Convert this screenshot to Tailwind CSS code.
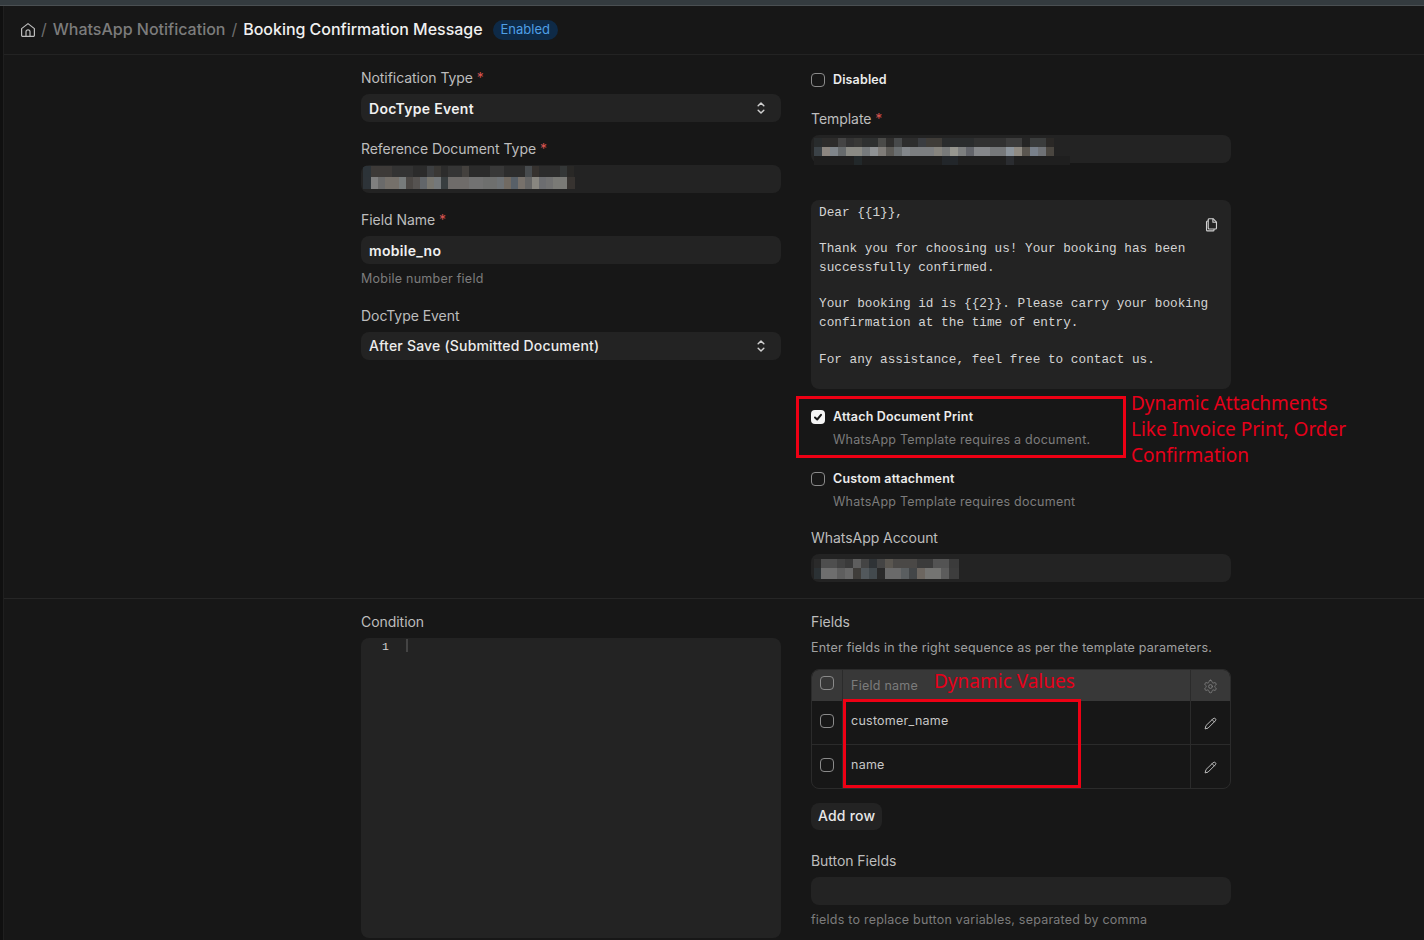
<!DOCTYPE html>
<html>
<head>
<meta charset="utf-8">
<script src="https://cdn.jsdelivr.net/npm/@tailwindcss/browser@4"></script>
</head>
<body class="bg-[#171717] font-['Inter','Liberation_Sans',sans-serif] overflow-hidden">
<div class="relative w-[1424px] h-[940px] overflow-hidden flex flex-col">
  <div class="h-[6px] bg-[#343b3f] border-b border-[#4a4f52] shrink-0"></div>
  <div class="flex flex-1 min-h-0">
    <div class="w-[4px] bg-[#101010] border-r border-[#1f1f1f] shrink-0"></div>
    <div class="flex-1 min-w-0">
      <header class="h-[49px] border-b border-[#232323] flex items-center pl-[16px] pb-[2px]">
        <svg class="w-4 h-4 text-[#bdbdbd] mr-[5px] mt-[2px]" viewBox="0 0 16 16" fill="none" stroke="currentColor" stroke-width="1.2" stroke-linejoin="round"><path d="M1.6 6.6 8 1.6l6.4 5V13.2a1.2 1.2 0 0 1-1.2 1.2H2.8a1.2 1.2 0 0 1-1.2-1.2z"/><path d="M6 14.4V9.8a2 2 0 0 1 4 0V14.4"/></svg>
        <span class="text-[#6e6e6e] text-base mr-[6px]">/</span>
        <span class="text-[#7c7c7c] text-base font-medium">WhatsApp Notification</span>
        <span class="text-[#6e6e6e] text-base mx-[6px]">/</span>
        <span class="text-[#f0f0f0] text-base font-medium tracking-[-0.03px]">Booking Confirmation Message</span>
        <span class="ml-[10px] mt-[2px] h-[20px] px-[8px] rounded-full bg-[#0e2a47] text-[#4f9fe6] text-[13px] flex items-center">Enabled</span>
      </header>

      <section class="h-[544px] border-b border-[#262626] flex pl-[357px] gap-[30px]">
        <div class="w-[420px] pt-[15px]">
          <div class="text-sm text-[#bdbdbd] leading-[16px] tracking-[-0.05px]">Notification Type <span class="text-[#d9534f]">*</span></div>
          <div class="mt-[8px] h-[28px] rounded-lg bg-[#232323] flex items-center justify-between pl-[8px] pr-[11px] text-sm font-semibold tracking-[0.3px] text-[#f0f0f0]"><span class="pt-[2px]">DocType Event</span>
            <svg class="w-[18px] h-[18px] text-[#d0d0d0]" viewBox="0 0 16 16" fill="none" stroke="currentColor" stroke-width="1.3" stroke-linecap="round" stroke-linejoin="round"><path d="M5.5 6 8 3.5 10.5 6M5.5 10 8 12.5 10.5 10"/></svg>
          </div>
          <div class="mt-[19px] text-sm text-[#bdbdbd] leading-[16px] tracking-[-0.05px]">Reference Document Type <span class="text-[#d9534f]">*</span></div>
          <div class="mt-[8px] h-[28px] rounded-lg bg-[#232323] overflow-hidden pl-[2px] pt-[1px]">
            <div class="flex h-[11px]">
              <div class="w-[8px] bg-[#2c3338]"></div><div class="w-[21px] bg-[#3d3a38]"></div><div class="w-[21px] bg-[#333333]"></div><div class="w-[14px] bg-[#2b2b2b]"></div><div class="w-[7px] bg-[#3d3f41]"></div><div class="w-[7px] bg-[#3a3835]"></div><div class="w-[7px] bg-[#2c2c2c]"></div><div class="w-[14px] bg-[#353535]"></div><div class="w-[7px] bg-[#44413e]"></div><div class="w-[21px] bg-[#2b2b2b]"></div><div class="w-[14px] bg-[#383838]"></div><div class="w-[21px] bg-[#2d2d2d]"></div><div class="w-[7px] bg-[#474b4e]"></div><div class="w-[7px] bg-[#36322f]"></div><div class="w-[21px] bg-[#2c2c2c]"></div><div class="w-[7px] bg-[#343737]"></div><div class="w-[7px] bg-[#292826]"></div>
            </div>
            <div class="flex h-[12px]">
              <div class="w-[8px] bg-[#2d3338]"></div><div class="w-[7px] bg-[#7f7f7f]"></div><div class="w-[7px] bg-[#6a6a6a]"></div><div class="w-[14px] bg-[#75706a]"></div><div class="w-[7px] bg-[#777b7b]"></div><div class="w-[7px] bg-[#4c4845]"></div><div class="w-[7px] bg-[#565351]"></div><div class="w-[7px] bg-[#62666a]"></div><div class="w-[7px] bg-[#78766f]"></div><div class="w-[7px] bg-[#74787a]"></div><div class="w-[7px] bg-[#383e40]"></div><div class="w-[21px] bg-[#6f6c6a]"></div><div class="w-[14px] bg-[#727272]"></div><div class="w-[14px] bg-[#6e6f6e]"></div><div class="w-[7px] bg-[#6e7275]"></div><div class="w-[7px] bg-[#716a62]"></div><div class="w-[7px] bg-[#586068]"></div><div class="w-[7px] bg-[#77716b]"></div><div class="w-[7px] bg-[#656565]"></div><div class="w-[7px] bg-[#888680]"></div><div class="w-[7px] bg-[#6c6d70]"></div><div class="w-[7px] bg-[#717171]"></div><div class="w-[14px] bg-[#7a7a76]"></div><div class="w-[8px] bg-[#373330]"></div>
            </div>
          </div>
          <div class="mt-[19px] text-sm text-[#bdbdbd] leading-[16px] tracking-[-0.05px]">Field Name <span class="text-[#d9534f]">*</span></div>
          <div class="mt-[8px] h-[28px] rounded-lg bg-[#232323] flex items-center pl-[8px] text-sm font-semibold tracking-[0.3px] text-[#f0f0f0]"><span class="pt-[2px]">mobile_no</span></div>
          <p class="mt-[7px] text-[12.5px] tracking-[0.25px] leading-[16px] text-[#7c7c7c]">Mobile number field</p>
          <div class="mt-[21px] text-sm text-[#bdbdbd] leading-[16px] tracking-[-0.05px]">DocType Event</div>
          <div class="mt-[8px] h-[28px] rounded-lg bg-[#232323] flex items-center justify-between pl-[8px] pr-[11px] text-sm font-medium tracking-[0.2px] text-[#ececec]">After Save (Submitted Document)
            <svg class="w-[18px] h-[18px] text-[#d0d0d0]" viewBox="0 0 16 16" fill="none" stroke="currentColor" stroke-width="1.3" stroke-linecap="round" stroke-linejoin="round"><path d="M5.5 6 8 3.5 10.5 6M5.5 10 8 12.5 10.5 10"/></svg>
          </div>
        </div>

        <div class="w-[420px] pt-[18px]">
          <label class="flex items-center gap-[8px] h-[14px]">
            <span class="w-[14px] h-[14px] rounded-[4px] border border-[#8a8a8a]"></span>
            <span class="text-[12.5px] font-semibold tracking-[0.15px] text-[#ececec]">Disabled</span>
          </label>
          <div class="mt-[24px] text-sm text-[#bdbdbd] leading-[16px] tracking-[-0.05px]">Template <span class="text-[#d9534f]">*</span></div>
          <div class="relative mt-[8px] h-[28px] rounded-lg bg-[#232323] pl-[3px] pt-[3px]">
            <div class="flex h-[9px]">
              <div class="w-[8px] bg-[#282b2c]"></div><div class="w-[16px] bg-[#2d2c2b]"></div><div class="w-[8px] bg-[#444444]"></div><div class="w-[8px] bg-[#333333]"></div><div class="w-[8px] bg-[#383836]"></div><div class="w-[16px] bg-[#2e3030]"></div><div class="w-[8px] bg-[#4a4a48]"></div><div class="w-[8px] bg-[#2f2e2d]"></div><div class="w-[8px] bg-[#47494a]"></div><div class="w-[16px] bg-[#2d2d2d]"></div><div class="w-[8px] bg-[#3a3c40]"></div><div class="w-[16px] bg-[#3f3c38]"></div><div class="w-[32px] bg-[#2a2c2d]"></div><div class="w-[32px] bg-[#313131]"></div><div class="w-[16px] bg-[#3c3c3c]"></div><div class="w-[8px] bg-[#252525]"></div><div class="w-[16px] bg-[#3a3c3c]"></div><div class="w-[8px] bg-[#2a2826]"></div>
            </div>
            <div class="flex h-[9px]">
              <div class="w-[8px] bg-[#3b4247]"></div><div class="w-[8px] bg-[#8c8680]"></div><div class="w-[8px] bg-[#7f858a]"></div><div class="w-[8px] bg-[#666a6c]"></div><div class="w-[16px] bg-[#8a8a84]"></div><div class="w-[8px] bg-[#767a7c]"></div><div class="w-[8px] bg-[#8f9294]"></div><div class="w-[8px] bg-[#7f7c78]"></div><div class="w-[8px] bg-[#5c5a56]"></div><div class="w-[8px] bg-[#6a6e70]"></div><div class="w-[8px] bg-[#82868a]"></div><div class="w-[24px] bg-[#7c7e80]"></div><div class="w-[8px] bg-[#86847e]"></div><div class="w-[8px] bg-[#787a7a]"></div><div class="w-[8px] bg-[#96968f]"></div><div class="w-[8px] bg-[#7d7f7f]"></div><div class="w-[8px] bg-[#62646a]"></div><div class="w-[16px] bg-[#85878a]"></div><div class="w-[16px] bg-[#76787a]"></div><div class="w-[8px] bg-[#8c949c]"></div><div class="w-[8px] bg-[#8f8a82]"></div><div class="w-[8px] bg-[#5a5650]"></div><div class="w-[8px] bg-[#78808a]"></div><div class="w-[8px] bg-[#6f7276]"></div><div class="w-[8px] bg-[#4a4640]"></div>
            </div>
            <div class="flex h-[9px]">
              <div class="w-[40px] bg-[#1e1e1e]"></div><div class="w-[8px] bg-[#22282a]"></div><div class="w-[80px] bg-[#1e1e1e]"></div><div class="w-[16px] bg-[#22262a]"></div><div class="w-[48px] bg-[#1f1f1f]"></div><div class="w-[8px] bg-[#2a2c30]"></div><div class="w-[56px] bg-[#1f1f1f]"></div>
            </div>
          </div>
          <div class="relative mt-[37px] h-[189px] rounded-lg bg-[#232323] px-[8px] pt-[3.75px] font-['Liberation_Mono',monospace] text-[12.72px] leading-[18.35px] text-[#d4d4d4] whitespace-pre">Dear {{1}},

Thank you for choosing us! Your booking has been
successfully confirmed.

Your booking id is {{2}}. Please carry your booking
confirmation at the time of entry.

For any assistance, feel free to contact us.<svg class="absolute right-[12px] top-[17px] w-[15px] h-[15px] text-[#d0d0d0]" viewBox="0 0 16 16" fill="none" stroke="currentColor" stroke-width="1.2" stroke-linejoin="round"><path d="M5.5 1.8h4.2l3.6 3.6v6.4a1 1 0 0 1-1 1H5.5a1 1 0 0 1-1-1V2.8a1 1 0 0 1 1-1z"/><path d="M9.5 1.8v3.8h3.8"/><path d="M4.5 4.2H3.7a1 1 0 0 0-1 1v8.6a1 1 0 0 0 1 1h6a1 1 0 0 0 1-1v-1"/></svg></div>
          <label class="mt-[21px] flex items-center gap-[8px] h-[14px]">
            <span class="w-[14px] h-[14px] rounded-[4px] bg-[#f5f5f5] flex items-center justify-center">
              <svg class="w-[10px] h-[10px]" viewBox="0 0 10 10" fill="none" stroke="#171717" stroke-width="2" stroke-linecap="round" stroke-linejoin="round"><path d="M2 5.5 4.2 7.5 8 2.8"/></svg>
            </span>
            <span class="text-[12.5px] font-semibold tracking-[0.18px] text-[#ececec]">Attach Document Print</span>
          </label>
          <p class="mt-[8px] pl-[22px] text-[12.5px] tracking-[0.25px] leading-[16px] text-[#7c7c7c]">WhatsApp Template requires a document.</p>
          <label class="mt-[24px] flex items-center gap-[8px] h-[14px]">
            <span class="w-[14px] h-[14px] rounded-[4px] border border-[#8a8a8a]"></span>
            <span class="text-[12.5px] font-semibold tracking-[0.18px] text-[#ececec]">Custom attachment</span>
          </label>
          <p class="mt-[8px] pl-[22px] text-[12.5px] tracking-[0.25px] leading-[16px] text-[#7c7c7c]">WhatsApp Template requires document</p>
          <div class="mt-[20px] text-sm text-[#bdbdbd] leading-[16px] tracking-[-0.05px]">WhatsApp Account</div>
          <div class="mt-[8px] h-[28px] rounded-lg bg-[#232323] pl-[3px] pt-[5px]">
            <div class="flex h-[9px]">
              <div class="w-[7px] bg-[#2a2a2a]"></div><div class="w-[16px] bg-[#4e4e4e]"></div><div class="w-[8px] bg-[#424242]"></div><div class="w-[8px] bg-[#3a3a3a]"></div><div class="w-[8px] bg-[#5e5e5e]"></div><div class="w-[8px] bg-[#444444]"></div><div class="w-[8px] bg-[#2f3336]"></div><div class="w-[8px] bg-[#444444]"></div><div class="w-[8px] bg-[#5a5650]"></div><div class="w-[24px] bg-[#4a4846]"></div><div class="w-[16px] bg-[#3b3b3b]"></div><div class="w-[16px] bg-[#535353]"></div><div class="w-[10px] bg-[#3b3b3b]"></div>
            </div>
            <div class="flex h-[11px]">
              <div class="w-[7px] bg-[#2b3134]"></div><div class="w-[16px] bg-[#6e6e6e]"></div><div class="w-[8px] bg-[#5e5e5e]"></div><div class="w-[8px] bg-[#686868]"></div><div class="w-[8px] bg-[#3f3d3a]"></div><div class="w-[8px] bg-[#52585c]"></div><div class="w-[8px] bg-[#434a4e]"></div><div class="w-[8px] bg-[#2a2a2a]"></div><div class="w-[16px] bg-[#6a6a6a]"></div><div class="w-[8px] bg-[#5a5e60]"></div><div class="w-[8px] bg-[#434648]"></div><div class="w-[8px] bg-[#6c6660]"></div><div class="w-[16px] bg-[#747472]"></div><div class="w-[8px] bg-[#5c5c5c]"></div><div class="w-[10px] bg-[#3d3d3d]"></div>
            </div>
          </div>
        </div>
      </section>

      <section class="flex pl-[357px] gap-[30px]">
        <div class="w-[420px] pt-[15px]">
          <div class="text-sm text-[#bdbdbd] leading-[16px] tracking-[-0.05px]">Condition</div>
          <div class="mt-[8px] h-[300px] rounded-lg bg-[#232323] flex items-start pt-[1px] font-['Liberation_Mono',monospace] text-[11.5px] text-[#d4d4d4]">
            <span class="w-[28px] text-right leading-[14px] pt-[1px]">1</span>
            <span class="ml-[17px] w-[2px] h-[13px] bg-[#444444]"></span>
          </div>
        </div>
        <div class="w-[420px] pt-[15px]">
          <div class="text-sm text-[#bdbdbd] leading-[16px] tracking-[-0.05px]">Fields</div>
          <p class="mt-[10px] text-[12.5px] tracking-[0.22px] leading-[16px] text-[#a0a0a0]">Enter fields in the right sequence as per the template parameters.</p>
          <div class="mt-[13px] rounded-lg border border-[#2b2b2b] overflow-hidden text-[12.5px] tracking-[0.25px]">
            <div class="flex h-[31px] bg-[#383838] text-[#7c7c7c]">
              <div class="w-[31px] flex items-start pt-[6px] justify-center border-r border-[#2b2b2b]"><span class="w-[14px] h-[14px] rounded-[4px] border border-[#8a8a8a]"></span></div>
              <div class="flex-1 pl-[8px] pt-[7px]">Field name</div>
              <div class="w-[40px] flex items-center justify-center border-l border-[#2b2b2b] pt-[2px]">
                <svg class="w-[15px] h-[15px] text-[#7c7c7c]" viewBox="0 0 24 24" fill="none" stroke="currentColor" stroke-width="1.6" stroke-linecap="round" stroke-linejoin="round"><path d="M12.22 2h-.44a2 2 0 0 0-2 2v.18a2 2 0 0 1-1 1.73l-.43.25a2 2 0 0 1-2 0l-.15-.08a2 2 0 0 0-2.73.73l-.22.38a2 2 0 0 0 .73 2.73l.15.1a2 2 0 0 1 1 1.72v.51a2 2 0 0 1-1 1.74l-.15.09a2 2 0 0 0-.73 2.73l.22.38a2 2 0 0 0 2.73.73l.15-.08a2 2 0 0 1 2 0l.43.25a2 2 0 0 1 1 1.73V20a2 2 0 0 0 2 2h.44a2 2 0 0 0 2-2v-.18a2 2 0 0 1 1-1.73l.43-.25a2 2 0 0 1 2 0l.15.08a2 2 0 0 0 2.73-.73l.22-.39a2 2 0 0 0-.73-2.73l-.15-.08a2 2 0 0 1-1-1.74v-.5a2 2 0 0 1 1-1.74l.15-.09a2 2 0 0 0 .73-2.73l-.22-.38a2 2 0 0 0-2.73-.73l-.15.08a2 2 0 0 1-2 0l-.43-.25a2 2 0 0 1-1-1.73V4a2 2 0 0 0-2-2z"/><circle cx="12" cy="12" r="3"/></svg>
              </div>
            </div>
            <div class="flex h-[44px] border-b border-[#2b2b2b] text-[#c7c7c7]">
              <div class="w-[31px] flex items-start pt-[13px] justify-center border-r border-[#2b2b2b]"><span class="w-[14px] h-[14px] rounded-[4px] border border-[#8a8a8a]"></span></div>
              <div class="flex-1 pl-[8px] pt-[11px]">customer_name</div>
              <div class="w-[40px] flex items-center justify-center border-l border-[#2b2b2b] pt-[2px]">
                <svg class="w-[13px] h-[13px] text-[#bdbdbd]" viewBox="0 0 24 24" fill="none" stroke="currentColor" stroke-width="1.8" stroke-linecap="round" stroke-linejoin="round"><path d="M17 3a2.8 2.8 0 1 1 4 4L7.5 20.5 2 22l1.5-5.5z"/><path d="m15 5 4 4"/></svg>
              </div>
            </div>
            <div class="flex h-[43px] text-[#c7c7c7]">
              <div class="w-[31px] flex items-start pt-[13px] justify-center border-r border-[#2b2b2b]"><span class="w-[14px] h-[14px] rounded-[4px] border border-[#8a8a8a]"></span></div>
              <div class="flex-1 pl-[8px] pt-[11px]">name</div>
              <div class="w-[40px] flex items-center justify-center border-l border-[#2b2b2b] pt-[1px]">
                <svg class="w-[13px] h-[13px] text-[#bdbdbd]" viewBox="0 0 24 24" fill="none" stroke="currentColor" stroke-width="1.8" stroke-linecap="round" stroke-linejoin="round"><path d="M17 3a2.8 2.8 0 1 1 4 4L7.5 20.5 2 22l1.5-5.5z"/><path d="m15 5 4 4"/></svg>
              </div>
            </div>
          </div>
          <button class="block mt-[14px] h-[27px] px-[7px] pb-[2px] rounded-lg bg-[#232323] text-sm font-medium tracking-[0.2px] text-[#e8e8e8]">Add row</button>
          <div class="mt-[23px] text-sm text-[#bdbdbd] leading-[16px] tracking-[-0.05px]">Button Fields</div>
          <div class="mt-[8px] h-[28px] rounded-lg bg-[#232323]"></div>
          <p class="mt-[7px] text-[12.5px] tracking-[0.22px] leading-[16px] text-[#7c7c7c]">fields to replace button variables, separated by comma</p>
        </div>
      </section>
    </div>
  </div>

  <div class="absolute left-[796px] top-[396px] w-[330px] h-[62px] border-[3px] border-[#ee0014]"></div>
  <div class="absolute left-[1131px] top-[390px] w-[240px] font-['Noto_Sans',sans-serif] text-[19px] leading-[26px] text-[#e6001a]">Dynamic Attachments<br>Like Invoice Print, Order<br>Confirmation</div>
  <div class="absolute left-[843px] top-[699px] w-[238px] h-[89px] border-[3px] border-[#ee0014]"></div>
  <div class="absolute left-[934px] top-[668px] font-['Noto_Sans',sans-serif] text-[19px] leading-[26px] text-[#e6001a]">Dynamic Values</div>
</div>
</body>
</html>
